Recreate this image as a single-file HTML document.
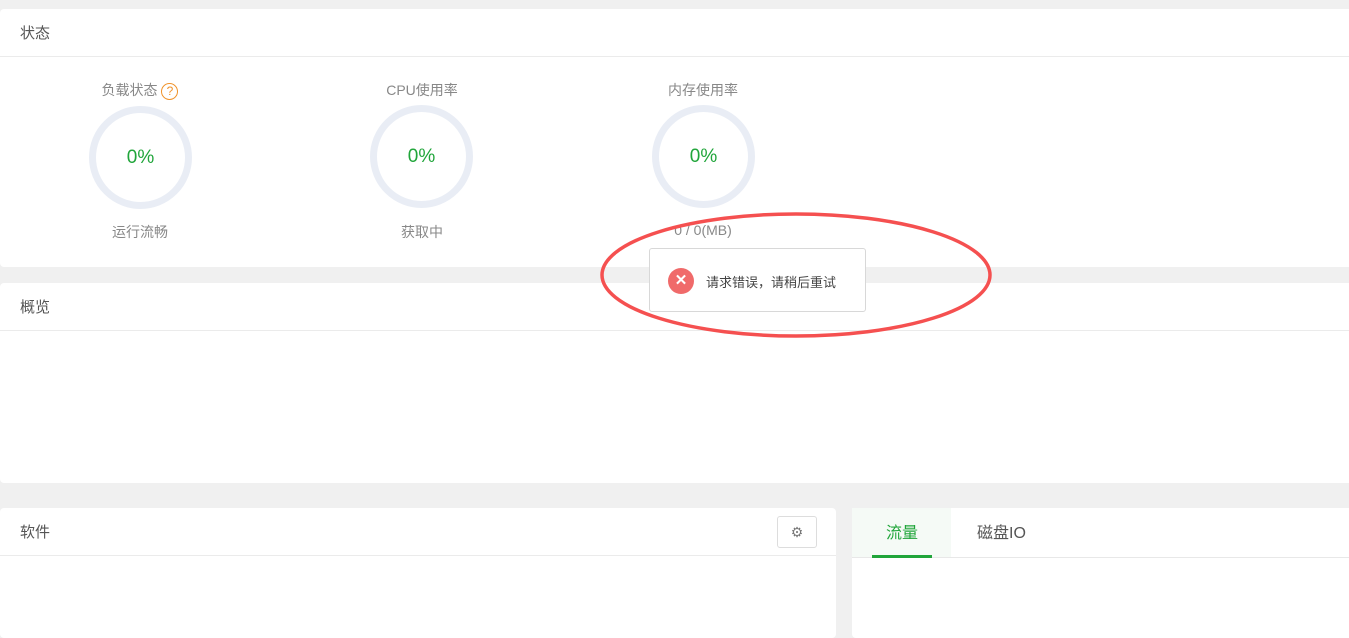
<!DOCTYPE html>
<html><head><meta charset="utf-8"><style>
body{margin:0;width:1349px;height:626px;background:#f0f0f0;position:relative;overflow:hidden;font-family:"Liberation Sans","Noto Sans CJK SC",sans-serif;}
.p{position:absolute;background:#fff;border-radius:4px;}
.h{height:47px;border-bottom:1px solid #ebebeb;font-size:15px;color:#555;line-height:50px;padding-left:20px;}
.lab{position:absolute;font-size:14px;color:#888;text-align:center;width:200px;}
.ring{position:absolute;width:89px;height:89px;border:7px solid #e9edf5;border-radius:50%;text-align:center;line-height:89px;font-size:19px;color:#20a53a;}
</style></head><body>
<div class="p" style="left:0;top:9px;width:1360px;height:258px;">
<div class="h">状态</div></div>
<div class="lab" style="left:40px;top:80px;">负载状态 <span style="display:inline-block;width:15px;height:15px;border:1.5px solid #f0932b;border-radius:50%;color:#f0932b;font-size:12px;line-height:15px;vertical-align:0px;">?</span></div>
<div class="ring" style="left:89px;top:106px;">0%</div>
<div class="lab" style="left:40px;top:222px;">运行流畅</div>
<div class="lab" style="left:322px;top:80px;">CPU使用率</div>
<div class="ring" style="left:370px;top:105px;">0%</div>
<div class="lab" style="left:322px;top:222px;">获取中</div>
<div class="lab" style="left:603px;top:80px;">内存使用率</div>
<div class="ring" style="left:652px;top:105px;">0%</div>
<div class="lab" style="left:603px;top:222px;">0 / 0(MB)</div>
<div class="p" style="left:0;top:283px;width:1360px;height:200px;"><div class="h">概览</div></div>
<div class="p" style="left:0;top:508px;width:836px;height:130px;"><div class="h">软件</div>
<div style="position:absolute;left:777px;top:8px;width:38px;height:30px;border:1px solid #ddd;border-radius:3px;text-align:center;line-height:30px;color:#777;font-size:14px;">⚙</div></div>
<div class="p" style="left:852px;top:508px;width:510px;height:130px;">
<div style="height:49px;border-bottom:1px solid #e8e8e8;position:relative;">
<div style="position:absolute;left:0;top:0;width:99px;height:49px;background:#f5faf6;"></div>
<div style="position:absolute;left:20px;top:0;width:60px;height:47px;border-bottom:3px solid #20a53a;color:#20a53a;font-size:16px;text-align:center;line-height:52px;">流量</div>
<div style="position:absolute;left:125px;top:0;color:#555;font-size:16px;line-height:52px;">磁盘IO</div></div></div>
<svg style="position:absolute;left:0;top:0" width="1349" height="626"><ellipse cx="796" cy="275" rx="194" ry="61" fill="none" stroke="#f55050" stroke-width="3.5"/></svg>
<div style="position:absolute;left:649px;top:248px;width:215px;height:62px;background:#fff;border:1px solid #d8d8d8;border-radius:3px;">
<div style="position:absolute;left:18px;top:19px;width:26px;height:26px;border-radius:50%;background:#f06a6a;color:#fff;text-align:center;line-height:26px;font-size:15px;font-weight:bold;">✕</div>
<div style="position:absolute;left:56px;top:23px;font-size:13px;color:#444;">请求错误，请稍后重试</div></div>
</body></html>
